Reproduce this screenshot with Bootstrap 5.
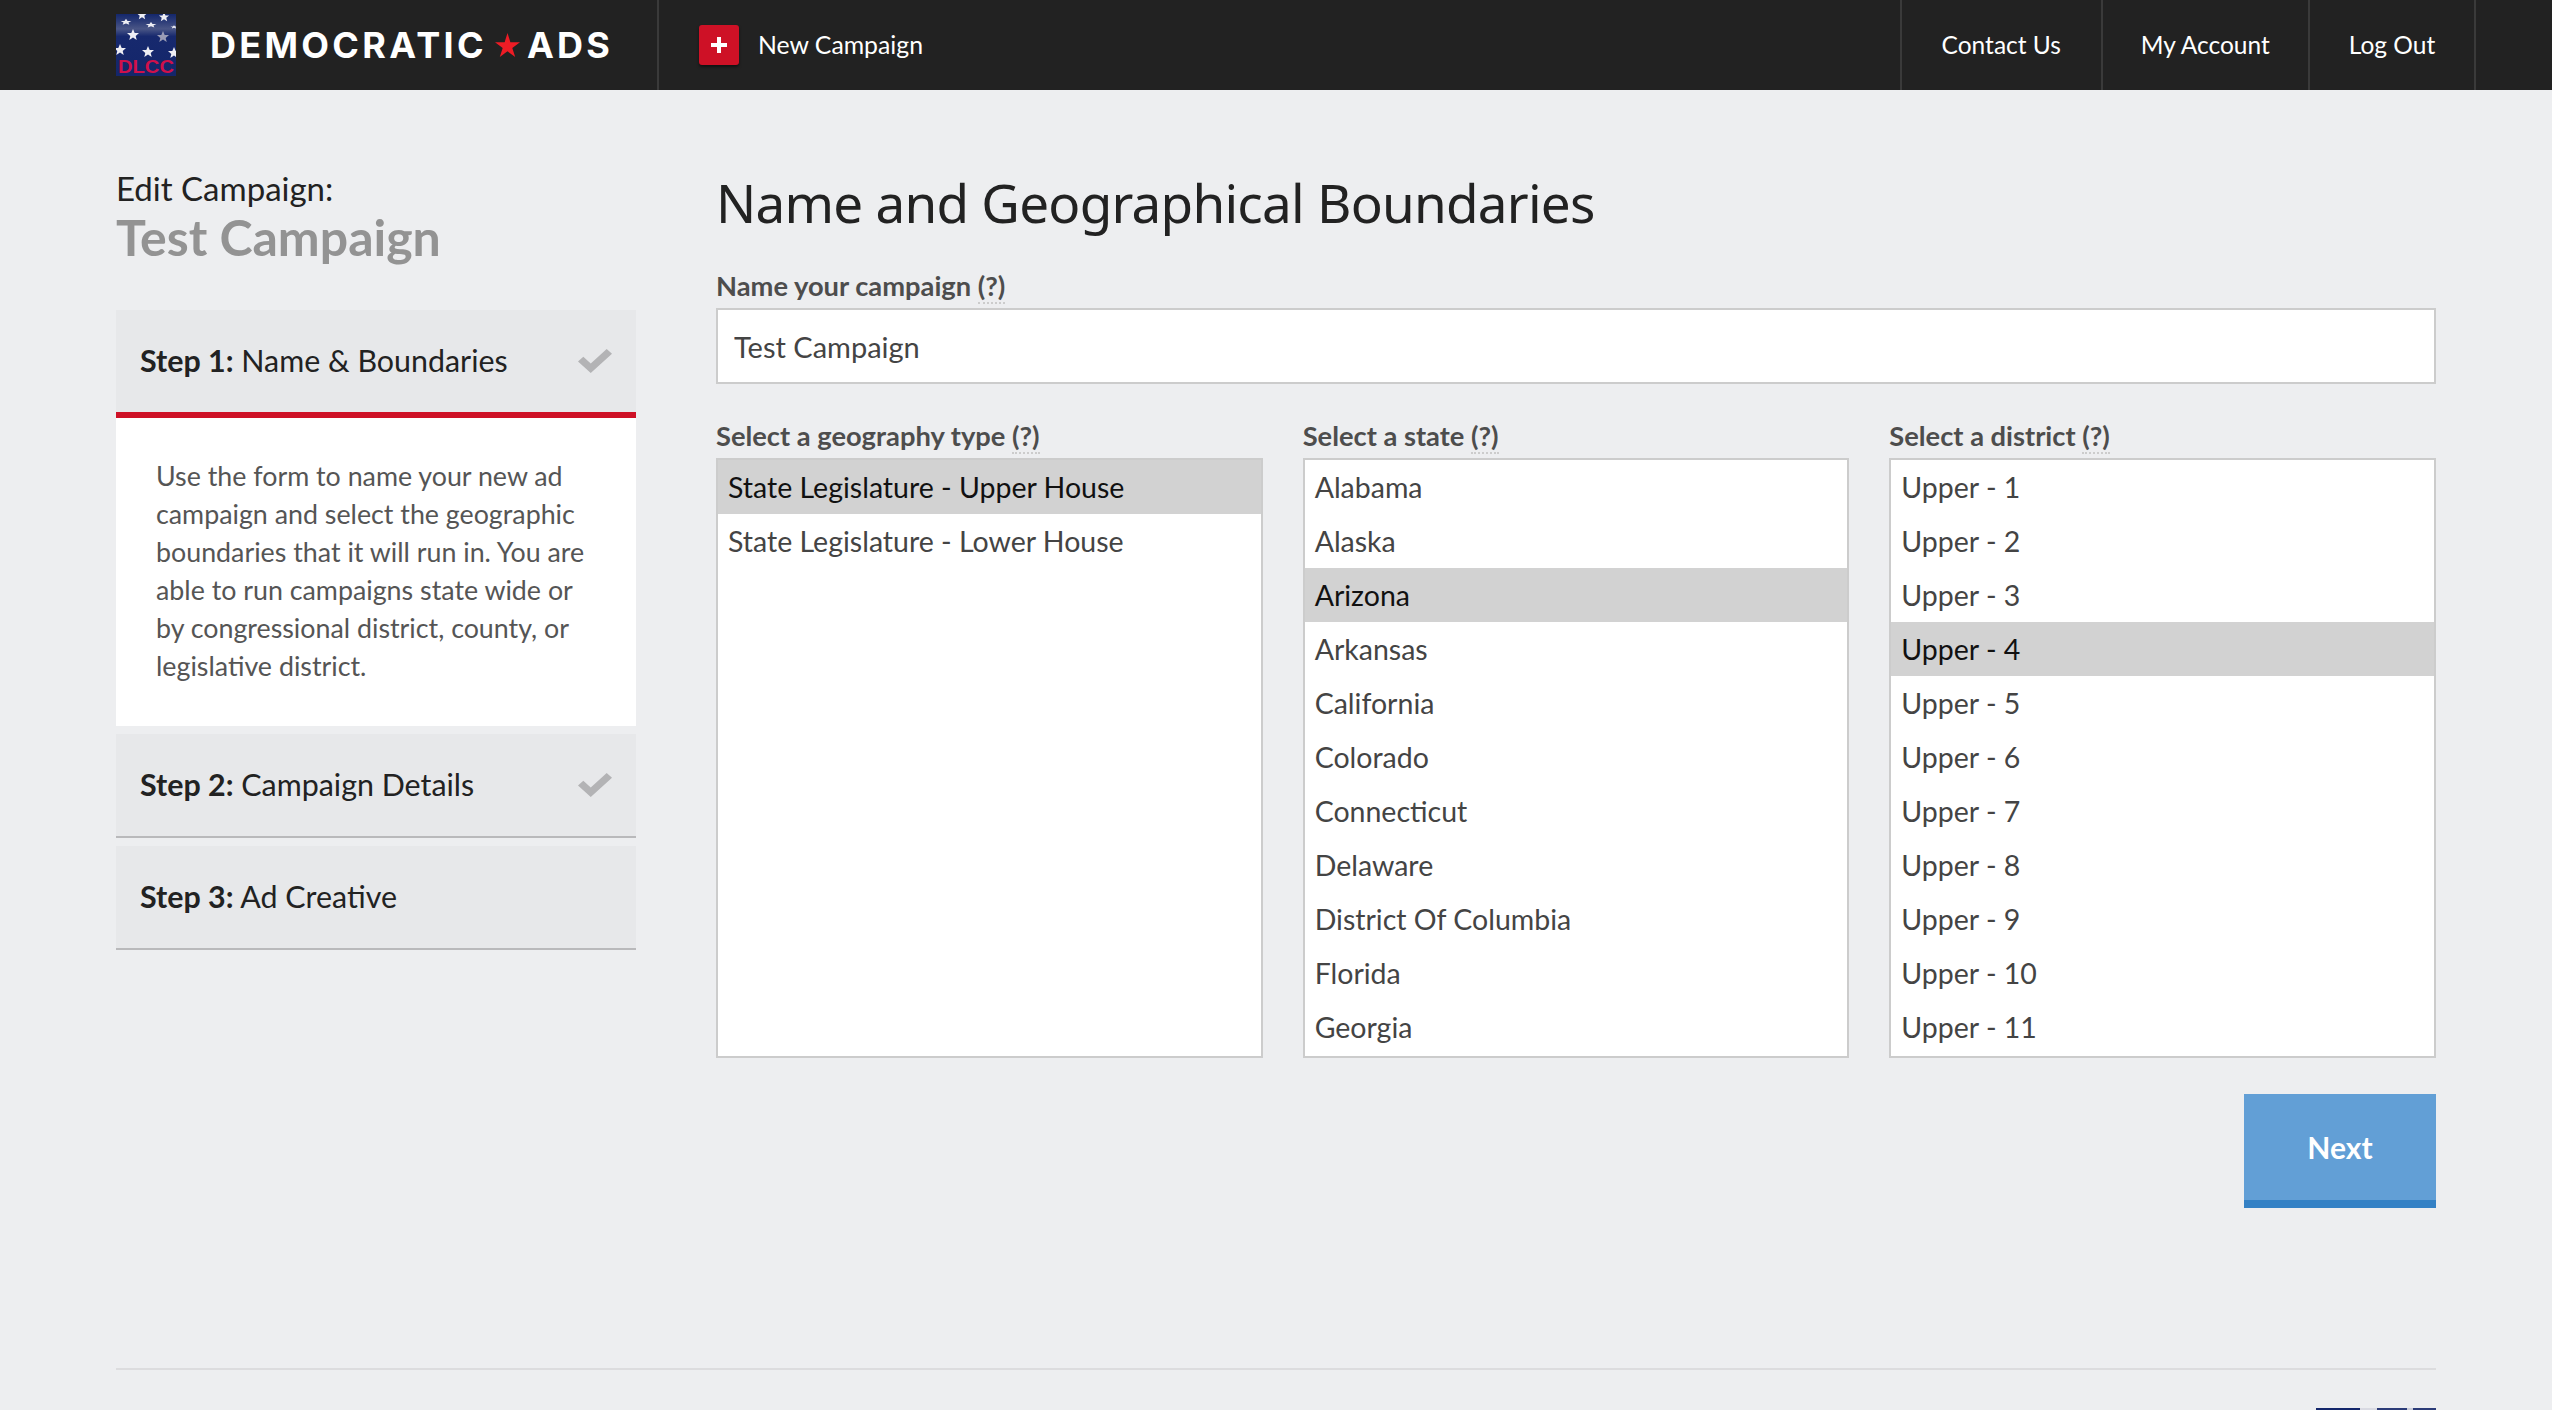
<!DOCTYPE html>
<html lang="en">
<head>
    <meta charset="UTF-8">
    <title>Democratic Ads - Edit Campaign</title>
    <link href="https://cdn.jsdelivr.net/npm/bootstrap@5.3.2/dist/css/bootstrap.min.css" rel="stylesheet">
    <style>
        html, body { height: 1410px; overflow: hidden; }
        body { background: #edeef0; font-family: "Lato", "Noto Sans", sans-serif; color: #222; }
        .topbar { height: 90px; background: #222; padding-left: 116px; padding-right: 76px; }
        .logo-box { width: 60px; height: 62px; }
        .brand-block { width: 541px; }
        .brand-name { font-family: "Inter", sans-serif; font-weight: 700; font-size: 36px; letter-spacing: 3.3px; color: #fff; margin-left: 34px; }
        .brand-star { margin: 0 7px 0 8px; }
        .new-camp { border-left: 2px solid #3a3a3a; padding-left: 40px; color: #fff; font-size: 24.8px; text-decoration: none; }
        .plus-box { width: 40px; height: 40px; background: #ce1126; border-radius: 3px; box-shadow: 0 2px 3px rgba(0,0,0,.5); margin-right: 19px; }
        .top-link { border-left: 2px solid #3a3a3a; color: #fff; font-size: 24.5px; text-decoration: none; width: 200.5px; }
        .top-link.acct { width: 207.5px; }
        .top-link.out { width: 168px; border-right: 2px solid #3a3a3a; }
        .page-wrap { width: 2320px; margin-left: 116px; }
        .side-col { width: 520px; margin-right: 80px; padding-top: 76px; }
        .main-col { width: 1720px; padding-top: 81px; }
        .edit-label { font-size: 33px; line-height: 44px; }
        .edit-name { font-size: 50px; line-height: 54px; font-weight: 700; color: #939393; margin-bottom: 46px; }
        .step-head { height: 104px; background: #e7e8ea; border-bottom: 2px solid #b9b9bb; padding: 0 24px; font-size: 30.4px; margin-bottom: 8px; }
        .step-head.current { height: 108px; border-bottom: 6px solid #ce1126; margin-bottom: 0; }
        .step-text { background: #fff; height: 308px; margin-bottom: 8px; padding: 39px 40px 0; font-size: 26.8px; line-height: 38px; color: #555; }
        .page-title { font-family: "Noto Sans", sans-serif; font-size: 53px; letter-spacing: -.75px; line-height: 64px; font-weight: 400; margin: 0 0 34px; }
        .field-label { font-size: 27.3px; font-weight: 700; color: #4d4d4d; line-height: 34px; margin-bottom: 5px; display: block; }
        .field-label span { border-bottom: 2px dotted #ccc; }
        .name-input { height: 76px; border: 2px solid #ccc; border-radius: 0; font: inherit; font-size: 29px; color: #444; padding: 0 16px; margin-bottom: 35px; }
        .geo-cols { gap: 40px; }
        .geo-col { width: 546.67px; }
        .geo-list { height: 600px; background: #fff; border: 2px solid #ccc; overflow: hidden; }
        .geo-opt { height: 54px; line-height: 54px; padding: 0 10px; font-size: 28.5px; color: #444; }
        .geo-opt.picked { background: #d2d2d2; color: #111; }
        .next-btn { width: 192px; height: 114px; background: #629fd6; border: 0; border-bottom: 8px solid #3481c5; border-radius: 0; color: #fff; font-size: 30px; font-weight: 700; margin-top: 36px; }
        .next-btn:hover { background: #629fd6; color: #fff; border-bottom-color: #3481c5; }
        .foot-wrap { width: 2320px; margin-left: 116px; margin-top: 160px; border-top: 2px solid #dcdcde; padding-top: 38px; }
        .foot-logo { width: 120px; height: 2px; }
    </style>
</head>
<body>
    <header class="topbar d-flex align-items-stretch">
        <div class="brand-block d-flex align-items-center">
            <svg class="logo-box" viewBox="0 0 60 62">
                <defs>
                    <linearGradient id="flagShade" x1="0" y1="0" x2="0" y2="1">
                        <stop offset="0" stop-color="#14276b"/>
                        <stop offset=".12" stop-color="#2c3c78"/>
                        <stop offset=".24" stop-color="#4a5686"/>
                        <stop offset=".36" stop-color="#17296e"/>
                        <stop offset="1" stop-color="#14266a"/>
                    </linearGradient>
                    <polygon id="flagStar" points="0,-6 1.700,-1.900 6,-1.900 2.700,.9 3.700,5 0,2.600 -3.700,5 -2.700,.9 -6,-1.900 -1.700,-1.900"/>
                </defs>
                <rect width="60" height="62" fill="url(#flagShade)"/>
                <g fill="#eeeef4">
                    <use href="#flagStar" transform="translate(17 21)"/>
                    <use href="#flagStar" transform="translate(47 23)" fill="#9a9cb5"/>
                    <use href="#flagStar" transform="translate(32 38)"/>
                    <use href="#flagStar" transform="translate(4 36)"/>
                    <use href="#flagStar" transform="translate(58 39)"/>
                    <use href="#flagStar" transform="translate(48 3) scale(.85)"/>
                    <use href="#flagStar" transform="translate(26 1) scale(.85)"/>
                    <use href="#flagStar" transform="translate(10 8) scale(.9 .55)"/>
                    <use href="#flagStar" transform="translate(35 11) scale(.9 .5)"/>
                    <use href="#flagStar" transform="translate(58 13) scale(.6 .3)"/>
                </g>
                <text x="2" y="59" font-family="Liberation Sans" font-weight="700" font-size="17.500" fill="#d0104a" textLength="56" lengthAdjust="spacingAndGlyphs">DLCC</text>
            </svg>
            <span class="brand-name d-flex align-items-center">DEMOCRATIC<svg class="brand-star" width="25" height="25" viewBox="0 0 26 26"><polygon fill="#ee1c25" points="13,0 16,9.500 26,9.500 18,15.500 21,25 13,19 5,25 8,15.500 0,9.500 10,9.500"/></svg>ADS</span>
        </div>
        <a href="#" class="new-camp d-flex align-items-center">
            <span class="plus-box d-flex align-items-center justify-content-center">
                <svg width="16" height="16" viewBox="0 0 16 16"><path d="M6 0h4v6h6v4h-6v6H6v-6H0V6h6z" fill="#fff"/></svg>
            </span>
            New Campaign
        </a>
        <nav class="d-flex ms-auto">
            <a href="#" class="top-link d-flex align-items-center justify-content-center">Contact Us</a>
            <a href="#" class="top-link acct d-flex align-items-center justify-content-center">My Account</a>
            <a href="#" class="top-link out d-flex align-items-center justify-content-center">Log Out</a>
        </nav>
    </header>

    <div class="page-wrap d-flex">
        <aside class="side-col">
            <div class="edit-label">Edit Campaign:</div>
            <div class="edit-name">Test Campaign</div>

            <div class="step-head current d-flex align-items-center justify-content-between">
                <span><b>Step 1:</b> Name &amp; Boundaries</span>
                <svg width="34" height="24" viewBox="1 1 32 25" preserveAspectRatio="none"><path d="M1 14l5-5 7 7L28 1l5 5-20 20z" fill="#b3b3b5"/></svg>
            </div>
            <div class="step-text">Use the form to name your new ad campaign and select the geographic boundaries that it will run in. You are able to run campaigns state wide or by congressional district, county, or legislative district.</div>
            <div class="step-head d-flex align-items-center justify-content-between">
                <span><b>Step 2:</b> Campaign Details</span>
                <svg width="34" height="24" viewBox="1 1 32 25" preserveAspectRatio="none"><path d="M1 14l5-5 7 7L28 1l5 5-20 20z" fill="#b3b3b5"/></svg>
            </div>
            <div class="step-head d-flex align-items-center">
                <span><b>Step 3:</b> Ad Creative</span>
            </div>
        </aside>

        <main class="main-col">
            <h1 class="page-title">Name and Geographical Boundaries</h1>
            <label class="field-label">Name your campaign <span>(?)</span></label>
            <input type="text" class="form-control name-input" value="Test Campaign">

            <div class="d-flex geo-cols">
                <div class="geo-col">
                    <label class="field-label">Select a geography type <span>(?)</span></label>
                    <div class="geo-list">
                        <div class="geo-opt picked">State Legislature - Upper House</div>
                        <div class="geo-opt">State Legislature - Lower House</div>
                    </div>
                </div>
                <div class="geo-col">
                    <label class="field-label">Select a state <span>(?)</span></label>
                    <div class="geo-list">
                        <div class="geo-opt">Alabama</div>
                        <div class="geo-opt">Alaska</div>
                        <div class="geo-opt picked">Arizona</div>
                        <div class="geo-opt">Arkansas</div>
                        <div class="geo-opt">California</div>
                        <div class="geo-opt">Colorado</div>
                        <div class="geo-opt">Connecticut</div>
                        <div class="geo-opt">Delaware</div>
                        <div class="geo-opt">District Of Columbia</div>
                        <div class="geo-opt">Florida</div>
                        <div class="geo-opt">Georgia</div>
                    </div>
                </div>
                <div class="geo-col">
                    <label class="field-label">Select a district <span>(?)</span></label>
                    <div class="geo-list">
                        <div class="geo-opt">Upper - 1</div>
                        <div class="geo-opt">Upper - 2</div>
                        <div class="geo-opt">Upper - 3</div>
                        <div class="geo-opt picked">Upper - 4</div>
                        <div class="geo-opt">Upper - 5</div>
                        <div class="geo-opt">Upper - 6</div>
                        <div class="geo-opt">Upper - 7</div>
                        <div class="geo-opt">Upper - 8</div>
                        <div class="geo-opt">Upper - 9</div>
                        <div class="geo-opt">Upper - 10</div>
                        <div class="geo-opt">Upper - 11</div>
                    </div>
                </div>
            </div>
            <div class="d-flex justify-content-end">
                <button class="btn next-btn">Next</button>
            </div>
        </main>
    </div>

    <footer class="foot-wrap d-flex justify-content-end">
        <svg class="foot-logo" viewBox="0 0 120 2" preserveAspectRatio="none">
            <rect width="120" height="2" fill="#14276b"/>
            <rect x="44" width="17" height="2" fill="#d9dae2"/>
            <rect x="61" width="30" height="2" fill="#2c3c78"/>
            <rect x="91" width="6" height="2" fill="#c9cbd8"/>
            <rect x="97" width="23" height="2" fill="#2c3c78"/>
        </svg>
    </footer>
    <script src="https://cdn.jsdelivr.net/npm/bootstrap@5.3.2/dist/js/bootstrap.bundle.min.js"></script>
</body>
</html>
